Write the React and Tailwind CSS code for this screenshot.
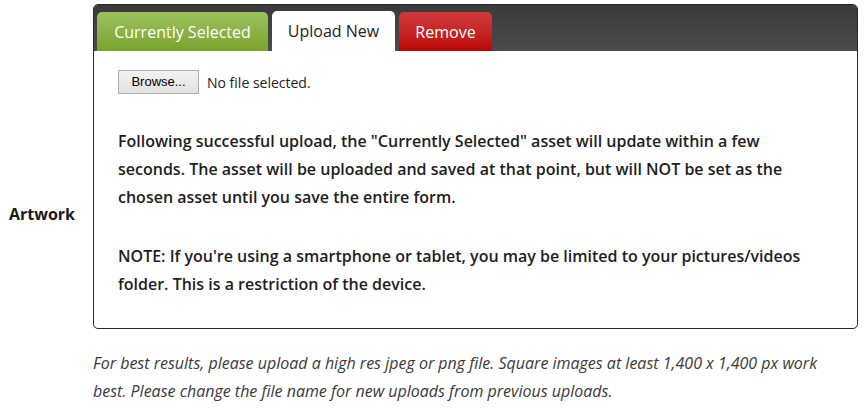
export default function App() {
    return (
        <div className="w-[864px] h-[408px] bg-white font-['Open_Sans',sans-serif] text-[#222]">
            <div className="flex pt-[4px]">
                {/* label column */}
                <div className="w-[93px] shrink-0 flex items-center pl-[9px] pt-[18px]">
                    <span className="text-[16px] font-bold text-[#1a1a1a]">Artwork</span>
                </div>

                <div className="w-[765px]">
                    {/* panel */}
                    <div className="border border-[#2a2a2a] rounded-[5px] overflow-hidden">
                        <div className="h-[46px] bg-gradient-to-b from-[#3a3a3a] to-[#4b4b4b] flex items-end gap-[4px] pl-[3px]">
                            <div className="h-[39px] w-[171px] rounded-t-[5px] bg-gradient-to-b from-[#9dc25d] to-[#7ba22c] text-white text-[16px] flex items-center justify-center">
                                Currently Selected
                            </div>
                            <div className="h-[40px] w-[123px] rounded-t-[5px] bg-white text-[#222] text-[16px] flex items-center justify-center">
                                Upload New
                            </div>
                            <div className="h-[39px] w-[93px] rounded-t-[5px] bg-gradient-to-b from-[#d03a3c] to-[#bb0000] text-white text-[16px] flex items-center justify-center">
                                Remove
                            </div>
                        </div>

                        <div className="pt-[19px] pl-[24px] pr-[20px] pb-[30px]">
                            <div className="flex items-center gap-[8px]">
                                <div className="w-[81px] h-[24px] border border-[#adadad] bg-gradient-to-b from-[#f2f2f2] to-[#e2e2e2] text-[13px] font-['Liberation_Sans',sans-serif] text-black flex items-center justify-center">
                                    Browse...
                                </div>
                                <span className="text-[14px] text-[#222]">No file selected.</span>
                            </div>

                            <p className="mt-[33px] w-[690px] text-[16px] leading-[28px] font-semibold text-[#1e1e1e]">
                                Following successful upload, the "Currently Selected" asset will update within a few seconds. The asset will be uploaded and saved at that point, but will NOT be set as the chosen asset until you save the entire form.
                            </p>
                            <p className="mt-[31px] w-[690px] text-[16px] leading-[28px] font-semibold text-[#1e1e1e]">
                                NOTE: If you're using a smartphone or tablet, you may be limited to your pictures/videos folder. This is a restriction of the device.
                            </p>
                        </div>
                    </div>

                    <p className="mt-[20px] w-[745px] text-[16px] leading-[28px] italic text-[#3a3a3a]">
                        For best results, please upload a high res jpeg or png file. Square images at least 1,400 x 1,400 px work best. Please change the file name for new uploads from previous uploads.
                    </p>
                </div>
            </div>
        </div>
    );
}
